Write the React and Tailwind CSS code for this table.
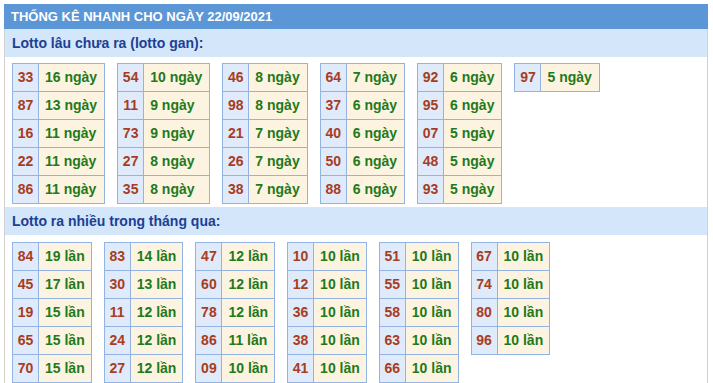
const gan = [
  [['33', '16'], ['87', '13'], ['16', '11'], ['22', '11'], ['86', '11']],
  [['54', '10'], ['11', '9'], ['73', '9'], ['27', '8'], ['35', '8']],
  [['46', '8'], ['98', '8'], ['21', '7'], ['26', '7'], ['38', '7']],
  [['64', '7'], ['37', '6'], ['40', '6'], ['50', '6'], ['88', '6']],
  [['92', '6'], ['95', '6'], ['07', '5'], ['48', '5'], ['93', '5']],
  [['97', '5']],
]

const nhieu = [
  [['84', '19'], ['45', '17'], ['19', '15'], ['65', '15'], ['70', '15']],
  [['83', '14'], ['30', '13'], ['11', '12'], ['24', '12'], ['27', '12']],
  [['47', '12'], ['60', '12'], ['78', '12'], ['86', '11'], ['09', '10']],
  [['10', '10'], ['12', '10'], ['36', '10'], ['38', '10'], ['41', '10']],
  [['51', '10'], ['55', '10'], ['58', '10'], ['63', '10'], ['66', '10']],
  [['67', '10'], ['74', '10'], ['80', '10'], ['96', '10']],
]

function LotoTable({ rows, unit, wide }) {
  return (
    <div className="flex flex-col self-start border-l border-t border-[#93b4e3]">
      {rows.map(([so, n]) => (
        <div key={so} className="flex h-[28px]">
          <div className="w-[26px] flex items-center justify-center bg-[#dfeafa] border-r border-b border-[#93b4e3] text-[#a83c1f]">
            {so}
          </div>
          <div className={`flex-1 flex items-center pl-[6px] ${wide ? 'pr-[7px]' : 'pr-[6px]'} bg-[#fdf3e1] border-r border-b border-[#93b4e3] text-[#1f7a1a]`}>
            {n} {unit}
          </div>
        </div>
      ))}
    </div>
  )
}

function SubHeader({ children }) {
  return (
    <div className="h-[28px] flex items-center px-[7px] bg-[#d3e6fa] text-[14px] font-bold text-[#1c3f94]">
      {children}
    </div>
  )
}

export default function App() {
  return (
    <div className="bg-white w-[713px] h-[383px] overflow-hidden pt-[4px] pl-[4px]" style={{ fontFamily: '"Liberation Sans", Arial, sans-serif' }}>
      <div className="w-[704px] border-x border-[#cfcfd4] min-h-[400px]">
        {/* Title bar */}
        <div className="-mx-px h-[25px] flex items-center px-[7px] bg-[#5b96d6] text-white text-[13px] font-bold">
          THỐNG KÊ NHANH CHO NGÀY 22/09/2021
        </div>

        <SubHeader>Lotto lâu chưa ra (lotto gan):</SubHeader>
        <div className="flex gap-x-[12px] pl-[7px] pt-[6px] text-[14px] font-bold">
          {gan.map((rows, i) => (
            <LotoTable key={i} rows={rows} unit="ngày" wide />
          ))}
        </div>

        <div className="mt-[3px]">
          <SubHeader>Lotto ra nhiều trong tháng qua:</SubHeader>
        </div>
        <div className="flex gap-x-[12px] pl-[7px] pt-[7px] text-[14px] font-bold">
          {nhieu.map((rows, i) => (
            <LotoTable key={i} rows={rows} unit="lần" />
          ))}
        </div>
      </div>
    </div>
  )
}
